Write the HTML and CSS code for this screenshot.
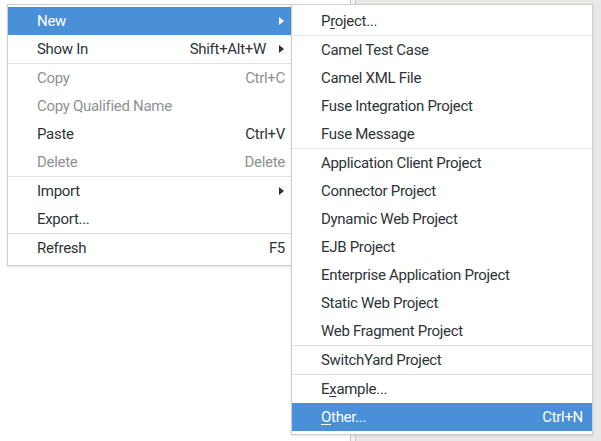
FILE: index.html
```html
<!DOCTYPE html>
<html>
<head>
<meta charset="utf-8">
<link rel="stylesheet" href="styles.css">
</head>
<body>
<div class="desk">
  <div class="pane-left"></div>
  <div class="sash"></div>
  <div class="pane-right"></div>
</div>

<div class="menu main-menu">
  <div class="item active"><span class="label">New</span><span class="arrow"></span></div>
  <div class="item"><span class="label">Show In</span><span class="accel">Shift+Alt+W</span><span class="arrow"></span></div>
  <div class="sep"></div>
  <div class="item disabled"><span class="label">Copy</span><span class="accel">Ctrl+C</span></div>
  <div class="item disabled"><span class="label">Copy Qualified Name</span></div>
  <div class="item"><span class="label">Paste</span><span class="accel">Ctrl+V</span></div>
  <div class="item disabled"><span class="label">Delete</span><span class="accel">Delete</span></div>
  <div class="sep"></div>
  <div class="item"><span class="label">Import</span><span class="arrow"></span></div>
  <div class="item"><span class="label">Export...</span></div>
  <div class="sep"></div>
  <div class="item"><span class="label">Refresh</span><span class="accel">F5</span></div>
</div>

<div class="menu sub-menu">
  <div class="item"><span class="label">P<u>r</u>oject...</span></div>
  <div class="sep"></div>
  <div class="item"><span class="label">Camel Test Case</span></div>
  <div class="item"><span class="label">Camel XML File</span></div>
  <div class="item"><span class="label">Fuse Integration Project</span></div>
  <div class="item"><span class="label">Fuse Message</span></div>
  <div class="sep"></div>
  <div class="item"><span class="label">Application Client Project</span></div>
  <div class="item"><span class="label">Connector Project</span></div>
  <div class="item"><span class="label">Dynamic Web Project</span></div>
  <div class="item"><span class="label">EJB Project</span></div>
  <div class="item"><span class="label">Enterprise Application Project</span></div>
  <div class="item"><span class="label">Static Web Project</span></div>
  <div class="item"><span class="label">Web Fragment Project</span></div>
  <div class="sep"></div>
  <div class="item"><span class="label">SwitchYard Project</span></div>
  <div class="sep"></div>
  <div class="item"><span class="label">E<u>x</u>ample...</span></div>
  <div class="item active"><span class="label"><u>O</u>ther...</span><span class="accel">Ctrl+N</span></div>
</div>
</body>
</html>
```

FILE: styles.css
```css
html, body {
  margin: 0;
  padding: 0;
  width: 601px;
  height: 441px;
  overflow: hidden;
}
body {
  position: relative;
  font-family: Roboto, "Noto Sans", sans-serif;
  font-size: 15px;
  letter-spacing: -0.3px;
  color: #2e3436;
}
.desk {
  display: flex;
  height: 441px;
}
.pane-left {
  width: 350px;
  background: #ffffff;
  border-right: 1px solid #c9c9c9;
}
.sash {
  width: 4px;
  background: #f2f2f2;
  border-right: 1px solid #c9c9c9;
}
.pane-right {
  flex: 1;
  background: #e8e8e7;
}
.menu {
  position: absolute;
  background: #ffffff;
  border: 1px solid #cfcfcf;
  box-shadow: 0 1px 2px rgba(0,0,0,0.12);
  padding: 2px 0 3px;
  display: flex;
  flex-direction: column;
}
.main-menu {
  left: 7px;
  top: 4px;
  width: 283px;
}
.sub-menu {
  left: 291px;
  top: 4px;
  width: 300px;
}
.item {
  height: 28px;
  display: flex;
  align-items: center;
  padding: 0 6px 0 29px;
  white-space: nowrap;
}
.sub-menu .item {
  padding-left: 29px;
  padding-right: 9px;
}
.item .label {
  flex: 1;
}
.item .accel {
  margin-left: 10px;
}
.item.disabled {
  color: #8f9192;
}
.item.active {
  background: #4a90d9;
  color: #ffffff;
}
.arrow {
  width: 0;
  height: 0;
  border-top: 4px solid transparent;
  border-bottom: 4px solid transparent;
  border-left: 5px solid #2e3436;
  margin-left: 13px;
  margin-right: 1px;
}
.item.active .arrow {
  border-left-color: #ffffff;
}
.sep {
  height: 1px;
  background: #e2e2e2;
}
u {
  text-decoration-thickness: 1px;
  text-underline-offset: 2px;
}
```
